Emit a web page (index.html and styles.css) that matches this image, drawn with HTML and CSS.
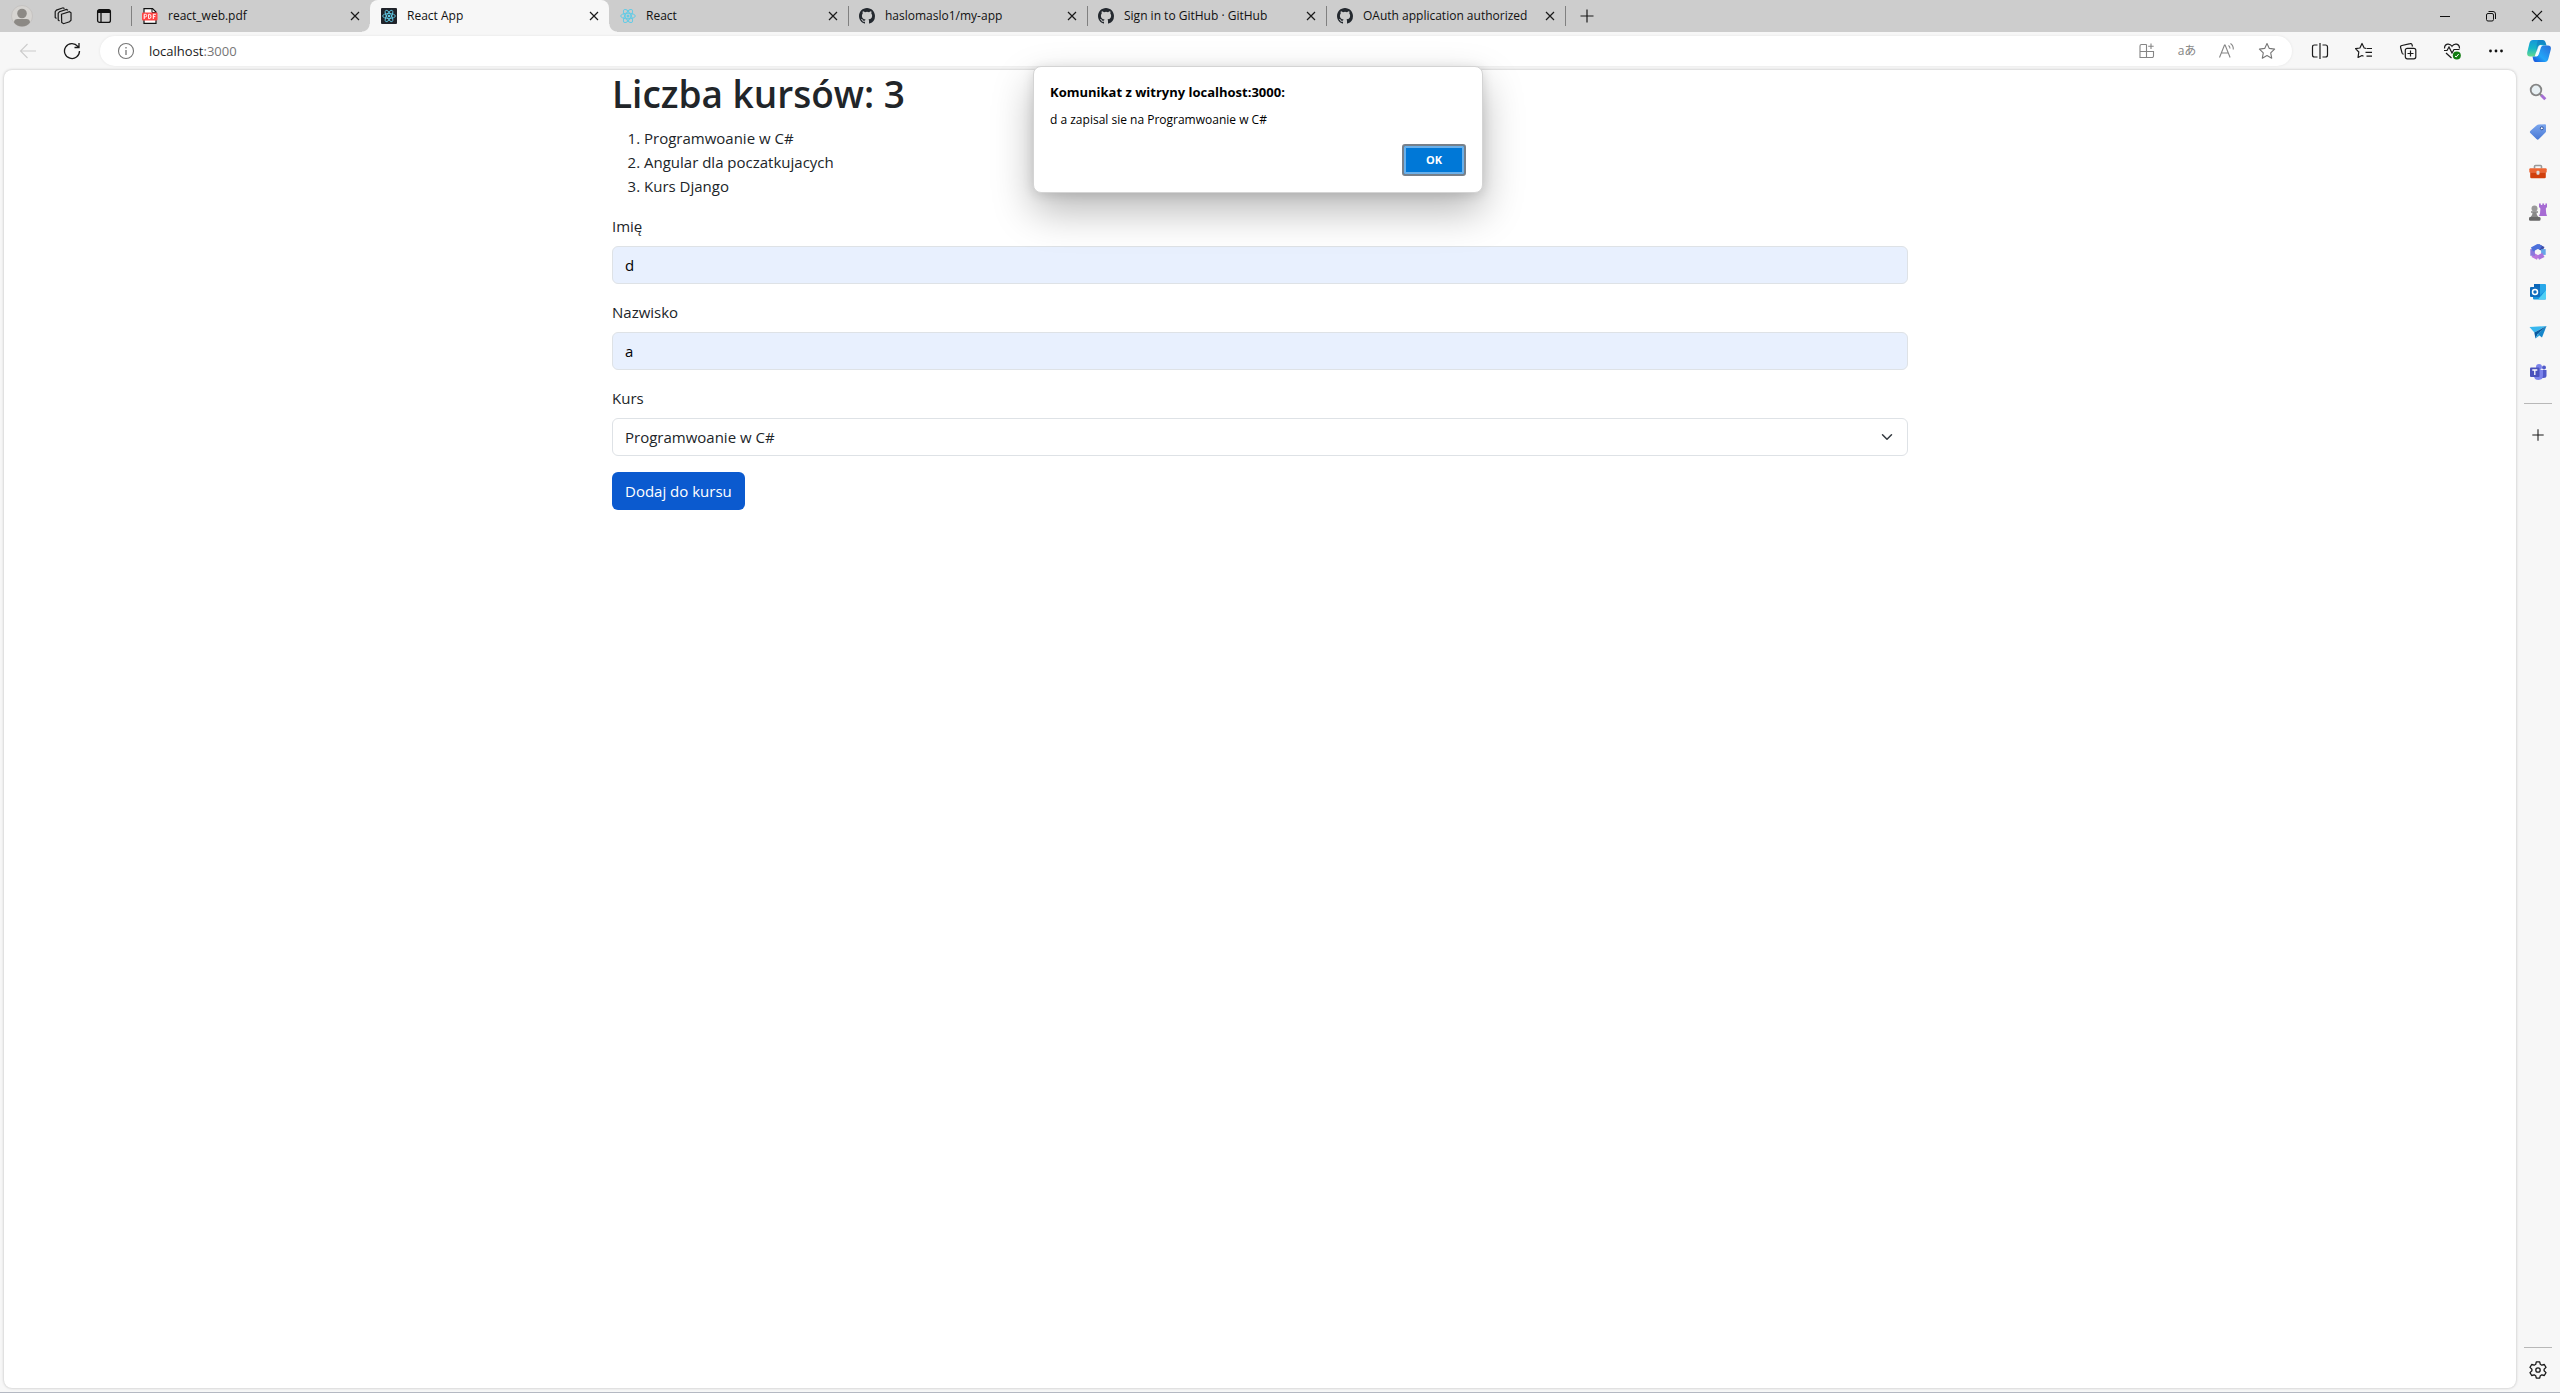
FILE: index.html
```html
<!DOCTYPE html>
<html lang="pl">
<head>
<meta charset="utf-8">
<meta name="viewport" content="width=device-width, initial-scale=1">
<title>React App</title>
<link rel="stylesheet" href="styles.css">
</head>
<body>
<svg class="defs" aria-hidden="true">
  <defs>
    <symbol id="close" viewBox="0 0 16 16"><path d="M4 4l8 8M12 4l-8 8" fill="none" stroke="#1a1a1a" stroke-width="1.2"/></symbol>
    <symbol id="plus" viewBox="0 0 16 16"><path d="M8 1.5v13M1.500 8h13" fill="none" stroke="currentColor" stroke-width="1.2"/></symbol>
    <symbol id="atom" viewBox="0 0 16 16"><g fill="none" stroke="#61cbe6" stroke-width="1"><ellipse cx="8" cy="8" rx="7.300" ry="2.800"/><ellipse cx="8" cy="8" rx="7.300" ry="2.800" transform="rotate(60 8 8)"/><ellipse cx="8" cy="8" rx="7.300" ry="2.800" transform="rotate(120 8 8)"/></g><circle cx="8" cy="8" r="1.500" fill="#61cbe6"/></symbol>
    <symbol id="github" viewBox="0 0 16 16"><path fill="#24292f" d="M8 0C3.580 0 0 3.580 0 8c0 3.540 2.290 6.530 5.470 7.590.4.070.55-.17.55-.38 0-.19-.01-.82-.01-1.490-2.010.37-2.530-.49-2.690-.94-.09-.23-.48-.94-.82-1.130-.28-.15-.68-.52-.01-.53.63-.01 1.080.58 1.230.82.72 1.210 1.870.87 2.330.66.07-.52.28-.87.51-1.070-1.780-.2-3.640-.89-3.640-3.950 0-.87.31-1.590.82-2.150-.08-.2-.36-1.020.08-2.120 0 0 .67-.21 2.200.82a7.600 7.600 0 0 1 4 0c1.530-1.040 2.200-.82 2.200-.82.44 1.100.16 1.920.08 2.120.51.56.82 1.270.82 2.150 0 3.070-1.870 3.750-3.650 3.950.29.25.54.73.54 1.480 0 1.070-.01 1.930-.01 2.200 0 .21.15.46.55.38A8 8 0 0 0 16 8c0-4.420-3.580-8-8-8z"/></symbol>
  </defs>
</svg>

<header class="tabstrip">
  <div class="strip-tools">
    <button class="icon-btn" aria-label="Profil"><svg width="22" height="22" viewBox="0 0 22 22"><circle cx="11" cy="11" r="10.500" fill="#d6d4d1" stroke="#bdbbb8" stroke-width=".6"/><circle cx="11" cy="8.500" r="4.800" fill="#8c8985"/><path d="M3 17.500c0-2.500 1.500-3.500 3.500-3.500h9c2 0 3.500 1 3.500 3.500-1.800 2.500-4.700 4-8 4s-6.200-1.500-8-4z" fill="#8c8985"/></svg></button>
    <button class="icon-btn" aria-label="Obszary robocze"><svg width="18" height="18" viewBox="0 0 18 18" fill="none" stroke="#1a1a1a" stroke-width="1.200"><path d="M7.500 7.200l8-2.500 1.500 1v7.500l-1.500 1.500-6 2-1.800-1.200z"/><path d="M5.500 14l-1.300-1V6.300l1.300-1.600 7-2.300 1.500.8"/><path d="M2.500 11.500l-1.300-1V4.600l1.300-1.500 6.500-2.300 1.500.8"/></svg></button>
    <button class="icon-btn" aria-label="Menu akcji kart"><svg width="16" height="16" viewBox="0 0 16 16"><rect x="1.600" y="1.600" width="12.800" height="12.800" rx="2" fill="none" stroke="#111" stroke-width="1.300"/><path d="M1.500 5V3.500a2 2 0 0 1 2-2h9a2 2 0 0 1 2 2V5z" fill="#111"/><path d="M5 4v10.500" stroke="#111" stroke-width="1.300"/></svg></button>
  </div>
  <nav class="tabs" aria-label="Karty">
    <div class="tab lined">
      <svg class="favicon" viewBox="0 0 16 16"><path d="M2 .6h8.500L14 4v11.400H2z" fill="#fff" stroke="#111" stroke-width="1.200"/><path d="M10 .6V4.500h4" fill="none" stroke="#111"/><rect x="0" y="4.500" width="15.500" height="8" rx="1" fill="#f44"/><path d="M2.200 11V6.300h1.300q1.200 0 1.200 1.300T3.500 8.900H2.300M6.600 6.300v4.300h.7q1.700 0 1.700-2.200T7.300 6.300zM11.300 11V6.300h2.500M11.300 8.600h2" fill="none" stroke="#fff" stroke-width="1"/></svg>
      <span class="tab-name">react_web.pdf</span>
      <button class="icon-btn" aria-label="Zamknij kartę"><svg width="16" height="16"><use href="#close"/></svg></button>
    </div>
    <div class="tab active">
      <svg class="favicon" viewBox="0 0 16 16"><rect width="16" height="16" rx="1" fill="#20232a"/><use href="#atom" x="1" y="1" width="14" height="14"/></svg>
      <span class="tab-name">React App</span>
      <button class="icon-btn" aria-label="Zamknij kartę"><svg width="16" height="16"><use href="#close"/></svg></button>
    </div>
    <div class="tab">
      <svg class="favicon"><use href="#atom"/></svg>
      <span class="tab-name">React</span>
      <button class="icon-btn" aria-label="Zamknij kartę"><svg width="16" height="16"><use href="#close"/></svg></button>
    </div>
    <div class="tab lined">
      <svg class="favicon"><use href="#github"/></svg>
      <span class="tab-name">haslomaslo1/my-app</span>
      <button class="icon-btn" aria-label="Zamknij kartę"><svg width="16" height="16"><use href="#close"/></svg></button>
    </div>
    <div class="tab lined">
      <svg class="favicon"><use href="#github"/></svg>
      <span class="tab-name">Sign in to GitHub · GitHub</span>
      <button class="icon-btn" aria-label="Zamknij kartę"><svg width="16" height="16"><use href="#close"/></svg></button>
    </div>
    <div class="tab lined">
      <svg class="favicon"><use href="#github"/></svg>
      <span class="tab-name">OAuth application authorized</span>
      <button class="icon-btn" aria-label="Zamknij kartę"><svg width="16" height="16"><use href="#close"/></svg></button>
    </div>
    <div class="new-tab"><button class="icon-btn" aria-label="Nowa karta"><svg width="16" height="16"><use href="#plus"/></svg></button></div>
  </nav>
  <div class="window-controls">
    <button class="icon-btn" aria-label="Minimalizuj"><svg width="12" height="12" viewBox="0 0 12 12"><path d="M1 6.500h10" stroke="#111"/></svg></button>
    <button class="icon-btn" aria-label="Przywróć"><svg width="12" height="12" viewBox="0 0 12 12" fill="none" stroke="#111"><rect x="1.500" y="3.500" width="7" height="7.500" rx="1.500"/><path d="M3.500 1.500H8a2.500 2.500 0 0 1 2.500 2.500v5"/></svg></button>
    <button class="icon-btn" aria-label="Zamknij"><svg width="12" height="12" viewBox="0 0 12 12"><path d="M1 1l10 10M11 1L1 11" stroke="#111" stroke-width="1.100"/></svg></button>
  </div>
</header>

<div class="toolbar">
  <div class="nav-buttons">
    <button class="icon-btn" aria-label="Wstecz" disabled><svg width="18" height="18" viewBox="0 0 18 18" fill="none" stroke="#ccc" stroke-width="1.100"><path d="M17 9H1.500M8.500 2L1.500 9l7 7"/></svg></button>
    <button class="icon-btn" aria-label="Odśwież"><svg width="18" height="18" viewBox="0 0 18 18" fill="none" stroke="#1a1a1a" stroke-width="1.300"><path d="M16.500 9A7.500 7.500 0 1 1 14.800 4.300L16 5.500M16 1v4.500h-4.500"/></svg></button>
  </div>
  <div class="address">
    <svg width="18" height="18" viewBox="0 0 18 18"><circle cx="9" cy="9" r="7.500" fill="none" stroke="#767676" stroke-width="1.100"/><path d="M9 8v5M9 5v1.500" stroke="#767676" stroke-width="1.300"/></svg>
    <span class="url">localhost<span class="port">:3000</span></span>
    <div class="address-tools">
      <button class="icon-btn" aria-label="Zainstaluj aplikację"><svg width="18" height="18" viewBox="0 0 18 18" fill="none" stroke="#858585" stroke-width="1.100"><path d="M8.500 2.500h-5a1.500 1.500 0 0 0-1.500 1.500v11.500h12a1.500 1.500 0 0 0 1.500-1.500V9.500H2M8.500 2.500v13M13 1.500v5.500M10.200 4.300h5.500"/></svg></button>
      <button class="icon-btn translate" aria-label="Przetłumacz">aあ</button>
      <button class="icon-btn" aria-label="Czytaj na głos"><svg width="18" height="18" viewBox="0 0 18 18" fill="none" stroke="#858585" stroke-width="1.100"><path d="M1.500 15.500L6.500 3h.6l5 12.500M3.400 11h7M10.500 3.500q1.500 1 1.500 3M12.500 1.500q3 2 2.800 6"/></svg></button>
      <button class="icon-btn" aria-label="Dodaj do ulubionych"><svg width="18" height="18" viewBox="0 0 18 18" fill="none" stroke="#767676" stroke-width="1.100" stroke-linejoin="round"><path d="M9 1.500l2.300 4.900 5.300.7-3.900 3.700 1 5.400L9 13.600l-4.700 2.600 1-5.400L1.400 7.100l5.300-.7z"/></svg></button>
    </div>
  </div>
  <div class="tools">
    <button class="icon-btn" aria-label="Podziel ekran"><svg width="18" height="18" viewBox="0 0 18 18" fill="none" stroke="#1a1a1a" stroke-width="1.200"><path d="M6.500 3H3.500Q1.500 3 1.500 5v8q0 2 2 2h3M11.500 3h3q2 0 2 2v8q0 2-2 2h-3M9 1v16"/></svg></button>
    <button class="icon-btn" aria-label="Ulubione"><svg width="18" height="18" viewBox="0 0 18 18" fill="none" stroke="#1a1a1a" stroke-width="1.200" stroke-linejoin="round"><path d="M11 6.300l-1.800-.3L7 1.500 4.900 6l-4.400.7 3.300 3.300-.8 5.500 4-2 1.500.8M11.500 6.500H17M10.500 10.300H17M11.500 14.200H17"/></svg></button>
    <button class="icon-btn" aria-label="Kolekcje"><svg width="18" height="18" viewBox="0 0 18 18" fill="none" stroke="#1a1a1a" stroke-width="1.200"><rect x="6.300" y="6.300" width="10.500" height="10.500" rx="2"/><path d="M11.500 8.500v6M8.500 11.500h6M13.500 4.500l-.5-1.800q-.4-1.400-1.800-1L3 3.500q-1.800.4-1.400 2l1.500 5.700q.3 1 1.500 1"/></svg></button>
    <button class="icon-btn" aria-label="Podstawy przeglądarki"><svg width="18" height="18" viewBox="0 0 18 18" fill="none" stroke="#1a1a1a" stroke-width="1.200"><path d="M1.500 6.500C1.500 1 7 1 9 4.300c2-3.300 7.500-3.300 7.500 2.200M3 11l5.500 5M1 8.500h3l2-3.500 3 6 2-3.500h5.500"/><circle cx="13.800" cy="13.500" r="4" fill="#107c10" stroke="none"/><path d="M12 14l1.200 1 2.500-3" stroke="#fff" stroke-width="1"/></svg></button>
    <button class="icon-btn" aria-label="Więcej"><svg width="18" height="18" viewBox="0 0 18 18" fill="#111"><circle cx="3.500" cy="9" r="1.400"/><circle cx="9" cy="9" r="1.400"/><circle cx="14.500" cy="9" r="1.400"/></svg></button>
    <button class="icon-btn" aria-label="Copilot"><svg width="24" height="24" viewBox="0 0 24 24"><defs><linearGradient id="cpa" x1="0" y1="0" x2="0" y2="1"><stop offset="0" stop-color="#1596d8"/><stop offset=".5" stop-color="#15b5c8"/><stop offset="1" stop-color="#65d98f"/></linearGradient><linearGradient id="cpb" x1="1" y1="0" x2="0" y2="1"><stop offset="0" stop-color="#2a6cd8"/><stop offset=".6" stop-color="#22a5f8"/><stop offset="1" stop-color="#1648d8"/></linearGradient></defs><path d="M6 1h9.500q2.500 0 3.200 3l.8 2.500h-3q-2 0-2.600 2l-2 6.500q-.8 2.500-3 2.500H3Q-.5 17.500.3 13L2.500 4Q3.300 1 6 1z" fill="url(#cpa)"/><path d="M18.500 6.500H21q3.500 0 2.800 4l-2.500 9.500q-.8 3-3.500 3H8.500q-1.800 0-2.300-2.500l-.7-3h3q2.200 0 3-2.500l2-6.500q.8-2 2.600-2z" fill="url(#cpb)"/><path d="M16.500 6.500q-2 0-2.600 2l-2 6.500q-.8 2.500-3 2.500l-1-.8 3-9q.8-1.700 2.500-1.700z" fill="#f4fbff"/><path d="M6 1h9.500q2.500 0 3.200 3l.8 2.500-5-1.200q-2.300 0-3.300 3.200l-1.700 5Q9 5 11 1z" fill="#0d5fae" opacity=".35"/></svg></button>
  </div>
</div>

<div class="workspace">
  <div class="viewport">
    <main class="page">
      <div class="container">
        <h1>Liczba kursów: 3</h1>
        <ol>
          <li>Programwoanie w C#</li>
          <li>Angular dla poczatkujacych</li>
          <li>Kurs Django</li>
        </ol>
        <form>
          <div class="field"><label for="imie">Imię</label><input id="imie" class="control" type="text" value="d"></div>
          <div class="field"><label for="nazwisko">Nazwisko</label><input id="nazwisko" class="control" type="text" value="a"></div>
          <div class="field"><label for="kurs">Kurs</label>
            <div class="select-wrap">
              <select id="kurs" class="control select"><option>Programwoanie w C#</option><option>Angular dla poczatkujacych</option><option>Kurs Django</option></select>
              <svg class="chevron" width="16" height="12" viewBox="0 0 16 16" aria-hidden="true"><path d="m2 5 6 6 6-6" fill="none" stroke="#343a40" stroke-width="2" stroke-linecap="round" stroke-linejoin="round"/></svg>
            </div>
          </div>
          <button class="submit" type="button">Dodaj do kursu</button>
        </form>
      </div>
    </main>
    <dialog class="alert" open aria-labelledby="alert-title">
      <h2 id="alert-title">Komunikat z witryny localhost:3000:</h2>
      <p>d a zapisal sie na Programwoanie w C#</p>
      <button class="ok" type="button">OK</button>
    </dialog>
  </div>
  <aside class="sidebar" aria-label="Pasek boczny">
    <button class="icon-btn" aria-label="Wyszukaj"><svg width="18" height="18" viewBox="0 0 18 18"><circle cx="7" cy="7" r="5.300" fill="#e8f0f4" stroke="#858585" stroke-width="1.800"/><path d="M11 11l2 2" stroke="#858585" stroke-width="2"/><path d="M12.300 12.300l4 4" stroke="#a66fd5" stroke-width="3"/></svg></button>
    <button class="icon-btn" aria-label="Zakupy"><svg width="18" height="18" viewBox="0 0 18 18"><defs><linearGradient id="tg" x1="0" y1="0" x2="0" y2="1"><stop offset="0" stop-color="#7ba6ee"/><stop offset="1" stop-color="#4878d4"/></linearGradient></defs><path d="M10 1.500l6-.3q1 0 1 1v6q0 .8-.6 1.400l-6.500 6.500q-1.200 1.200-2.400 0L1.300 10q-1-1 .2-2.200l6-5.300q1-.9 2.500-1z" fill="url(#tg)"/><circle cx="12.800" cy="5.300" r="1.500" fill="#fff" stroke="#2b4f9c"/></svg></button>
    <button class="icon-btn" aria-label="Narzędzia"><svg width="18" height="18" viewBox="0 0 18 18"><path d="M5.500 5.500v-2q0-1 1-1h5q1 0 1 1v2" fill="none" stroke="#999" stroke-width="1.600"/><rect x=".3" y="5.300" width="17.400" height="4.500" rx="1" fill="#ec6533"/><path d="M1.200 9.500h15.600V14q0 1.300-1.300 1.300h-13Q1.200 15.300 1.200 14z" fill="#d1400d"/><rect x="7.500" y="7.700" width="3" height="4" rx="1" fill="#ddd"/></svg></button>
    <button class="icon-btn" aria-label="Gry"><svg width="18" height="18" viewBox="0 0 18 18"><path d="M10 .5h1.800V2h1.500V.5h1.800V2h1.300V.5H18V4l-1.200 1.500.4 5 .8 2.500h-8l1-2.500.4-5L10 4z" fill="#a66bd3"/><circle cx="5.500" cy="5.500" r="3" fill="#999"/><path d="M2 8.300h7v1.500H7.500q0 3 2 4.200h-8q2-1.200 2-4.200H2z" fill="#888"/><rect y="14" width="11.500" height="3.700" rx="1.300" fill="#686868"/></svg></button>
    <button class="icon-btn" aria-label="Microsoft 365"><svg width="18" height="18" viewBox="0 0 18 18" fill="none" stroke-width="4.600" stroke-linejoin="round"><path d="M9 3.200L14.400 6.100" stroke="#3b4ba6"/><path d="M14.400 6.100V11.900" stroke="#65a5e7"/><path d="M14.400 11.900L9 14.800" stroke="#a873dc"/><path d="M9 14.800L3.600 11.900" stroke="#bb76dc"/><path d="M3.600 12.800V6.100" stroke="#8b77dc"/><path d="M3 6.500L9 3.200l3 1.600" stroke="#4c70db"/></svg></button>
    <button class="icon-btn" aria-label="Outlook"><svg width="18" height="18" viewBox="0 0 18 18"><rect x="5" y="1" width="12" height="11" rx="1" fill="#28a8ea"/><path d="M5 1h6v5H5z" fill="#0a66b8"/><path d="M4 9l7 3 6-5v8.500q0 1-1 1H5q-1 0-1-1z" fill="#1593dd"/><path d="M17 7v8.500q0 1-1 1H9z" fill="#50d0f5"/><rect x="1" y="4" width="10" height="10" rx="1" fill="#0f6cbd"/><circle cx="6" cy="9" r="2.500" fill="none" stroke="#fff" stroke-width="1.500"/></svg></button>
    <button class="icon-btn" aria-label="Upuść"><svg width="18" height="18" viewBox="0 0 18 18"><path d="M.5 4L17.500 3 5.300 9.500z" fill="#38b7ef"/><path d="M17.500 3L13 14.500 8.500 11z" fill="#1687cb"/><path d="M17.500 3L5.300 9.500l1.200 6L8.700 11z" fill="#085a9f"/><path d="M6.500 15.500L8.700 11l1.800 1.500z" fill="#2ba6e2"/></svg></button>
    <button class="icon-btn" aria-label="Teams"><svg width="18" height="18" viewBox="0 0 18 18"><circle cx="10" cy="4" r="3" fill="#7b83eb"/><circle cx="15" cy="4.500" r="2" fill="#5059c9"/><path d="M12 7h5.500v5.500q0 2.500-3 2.500H12z" fill="#5059c9"/><path d="M6 7h8v5q0 5-4.500 5T5 12.500z" fill="#7b83eb"/><rect x="1" y="4.500" width="9.500" height="9.500" rx="1" fill="#4b53bc"/><path d="M3.300 7h5M5.800 7v5" stroke="#fff" stroke-width="1.300"/></svg></button>
    <hr>
    <button class="icon-btn" aria-label="Dostosuj"><svg width="14" height="14"><use href="#plus"/></svg></button>
    <div class="spacer"></div>
    <hr>
    <button class="icon-btn" aria-label="Ustawienia"><svg width="20" height="20" viewBox="0 0 20 20" fill="none" stroke="#1a1a1a" stroke-width="1.300" stroke-linejoin="round"><circle cx="10" cy="10" r="2.200"/><path d="M8.300 1.800h3.400l.6 2.500 1.500.9 2.500-.7 1.700 2.900-1.900 1.800v1.600l1.900 1.800-1.700 2.900-2.500-.7-1.500.9-.6 2.500H8.300l-.6-2.500-1.500-.9-2.500.7L2 12.600l1.900-1.800V9.200L2 7.400l1.700-2.900 2.500.7 1.500-.9z"/></svg></button>
  </aside>
</div>
</body>
</html>
```
FILE: styles.css
```css
* { box-sizing: border-box; }

body {
  margin: 0;
  min-height: 100vh;
  display: flex;
  flex-direction: column;
  background: #f7f7f7;
  color: #212529;
  font-family: "Open Sans", "Noto Sans CJK JP", sans-serif;
  font-size: 15px;
  line-height: 24px;
  border-bottom: 1px solid #b4b8c2;
}

.defs { position: absolute; width: 0; height: 0; }

svg { display: block; flex: none; }

.icon-btn {
  display: flex;
  align-items: center;
  justify-content: center;
  padding: 0;
  border: 0;
  background: none;
  color: #1a1a1a;
  font: inherit;
}

/* Tab strip */
.tabstrip {
  display: flex;
  height: 32px;
  background: #cdcdcd;
}

.strip-tools {
  display: flex;
  width: 131px;
  padding-left: 1px;
}

.strip-tools .icon-btn { width: 41px; }

.tabs { display: flex; }

.tab {
  position: relative;
  display: flex;
  align-items: center;
  width: 239px;
  padding: 0 7px 0 11px;
  color: #111;
  font-size: 12px;
}

.lined::before,
.new-tab::before {
  content: "";
  position: absolute;
  left: 0;
  top: 6px;
  width: 1px;
  height: 20px;
  background: #808080;
}

.tab.active {
  background: #f7f7f7;
  border-radius: 8px 8px 0 0;
}

.tab.active::before,
.tab.active::after {
  content: "";
  position: absolute;
  bottom: 0;
  width: 8px;
  height: 8px;
}

.tab.active::before {
  left: -8px;
  background: radial-gradient(circle at 0 0, #cdcdcd 7px, #f7f7f7 8px);
}

.tab.active::after {
  right: -8px;
  background: radial-gradient(circle at 8px 0, #cdcdcd 7px, #f7f7f7 8px);
}

.favicon { width: 16px; height: 16px; }

.tab-name {
  flex: 1;
  margin-left: 10px;
  white-space: nowrap;
  overflow: hidden;
}

.new-tab {
  position: relative;
  display: flex;
  justify-content: center;
  width: 44px;
}

.window-controls {
  display: flex;
  margin-left: auto;
}

.window-controls .icon-btn { width: 46px; }

/* Toolbar */
.toolbar {
  display: flex;
  align-items: center;
  height: 38px;
}

.nav-buttons {
  display: flex;
  width: 100px;
  padding-left: 6px;
}

.nav-buttons .icon-btn { width: 44px; }

.address {
  flex: 1;
  display: flex;
  align-items: center;
  height: 30px;
  padding: 0 5px 0 17px;
  border-radius: 15px;
  background: #fff;
  box-shadow: 0 0 3px rgba(0, 0, 0, .08);
}

.url {
  margin-left: 14px;
  color: #1a1a1a;
  font-size: 13px;
}

.port { color: #767676; }

.address-tools {
  display: flex;
  margin-left: auto;
}

.address-tools .icon-btn { width: 40px; }

.address-tools .translate {
  color: #858585;
  font-size: 12px;
}

.tools {
  display: flex;
  padding-left: 6px;
}

.tools .icon-btn { width: 44px; height: 30px; }

.tools .icon-btn:last-child { width: 42px; }

/* Content area and page */
.workspace {
  flex: 1;
  display: flex;
}

.viewport {
  position: relative;
  flex: 1;
  display: flex;
  padding: 0 0 4px 4px;
}

.page {
  flex: 1;
  background: #fff;
  border-radius: 8px;
  box-shadow: 0 0 3px rgba(0, 0, 0, .25);
}

.container {
  max-width: 1320px;
  margin: 0 auto;
  padding: 0 12px;
}

h1 {
  margin: 0 0 8px;
  font-size: 37px;
  font-weight: 600;
  line-height: 48px;
}

ol {
  margin: 0 0 16px;
  padding-left: 32px;
}

.field { margin-bottom: 16px; }

.field label {
  display: block;
  width: max-content;
  margin-bottom: 8px;
}

.control {
  display: block;
  width: 100%;
  height: 38px;
  padding: 6px 12px;
  border: 1px solid #dee2e6;
  border-radius: 6px;
  background: #e8f0fe;
  color: #000;
  font: inherit;
}

.select {
  appearance: none;
  background: #fff;
  color: #212529;
}

.select-wrap { position: relative; }

.chevron {
  position: absolute;
  right: 13px;
  top: 13px;
}

.submit {
  display: block;
  height: 38px;
  padding: 0 13px;
  border: 0;
  border-radius: 6px;
  background: #0b5acf;
  color: #fff;
  font: inherit;
}

/* Alert over the page */
.alert {
  position: absolute;
  top: -4px;
  left: 0;
  right: 0;
  display: flex;
  flex-direction: column;
  width: 450px;
  margin: 0 auto;
  padding: 15px 16px 16px;
  border: 1px solid #d4d4d4;
  border-radius: 8px;
  background: #fff;
  color: #000;
  font-size: 12px;
  line-height: 20px;
  box-shadow: 0 18px 40px rgba(0, 0, 0, .28), 0 2px 12px rgba(0, 0, 0, .12);
}

.alert h2 {
  margin: 0 0 8px;
  font-size: 13px;
  font-weight: 700;
}

.alert p { margin: 0 0 14px; }

.ok {
  align-self: flex-end;
  width: 64px;
  height: 32px;
  padding: 0;
  border: 2px solid #77808a;
  border-radius: 3px;
  background: #0078d7;
  box-shadow: inset 0 0 0 2px #6ab0ea;
  color: #fff;
  font: inherit;
  font-size: 11px;
  font-weight: 700;
}

/* Side bar */
.sidebar {
  display: flex;
  flex-direction: column;
  align-items: center;
  width: 44px;
  padding: 2px 0;
}

.sidebar .icon-btn { width: 40px; height: 40px; }

.sidebar hr {
  width: 28px;
  margin: 11px 0;
  border: 0;
  border-top: 1px solid #b8b8b8;
}

.sidebar hr:last-of-type { margin: 0 0 2px; }

.spacer { flex: 1; }
```
